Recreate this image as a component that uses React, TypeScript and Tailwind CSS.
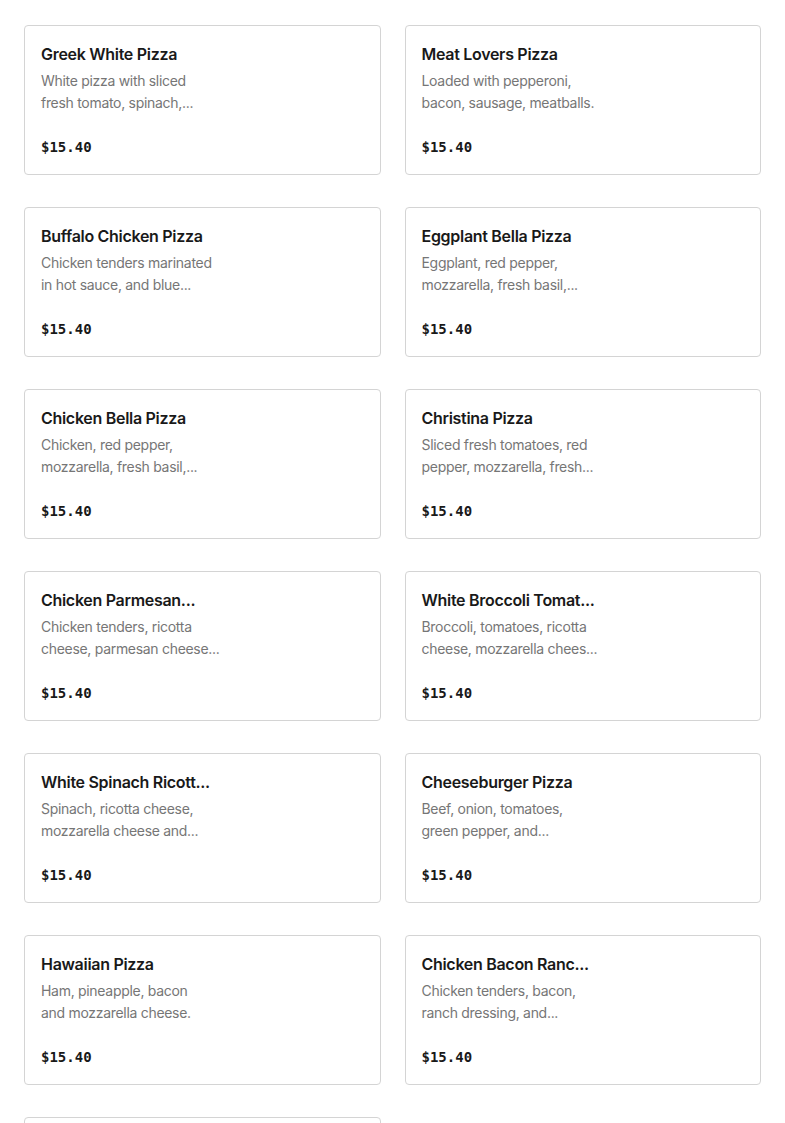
const items = [
  { name: 'Greek White Pizza', lines: ['White pizza with sliced', 'fresh tomato, spinach,...'] },
  { name: 'Meat Lovers Pizza', lines: ['Loaded with pepperoni,', 'bacon, sausage, meatballs.'] },
  { name: 'Buffalo Chicken Pizza', lines: ['Chicken tenders marinated', 'in hot sauce, and blue...'] },
  { name: 'Eggplant Bella Pizza', lines: ['Eggplant, red pepper,', 'mozzarella, fresh basil,...'] },
  { name: 'Chicken Bella Pizza', lines: ['Chicken, red pepper,', 'mozzarella, fresh basil,...'] },
  { name: 'Christina Pizza', lines: ['Sliced fresh tomatoes, red', 'pepper, mozzarella, fresh...'] },
  { name: 'Chicken Parmesan...', lines: ['Chicken tenders, ricotta', 'cheese, parmesan cheese...'] },
  { name: 'White Broccoli Tomat...', lines: ['Broccoli, tomatoes, ricotta', 'cheese, mozzarella chees...'] },
  { name: 'White Spinach Ricott...', lines: ['Spinach, ricotta cheese,', 'mozzarella cheese and...'] },
  { name: 'Cheeseburger Pizza', lines: ['Beef, onion, tomatoes,', 'green pepper, and...'] },
  { name: 'Hawaiian Pizza', lines: ['Ham, pineapple, bacon', 'and mozzarella cheese.'] },
  { name: 'Chicken Bacon Ranc...', lines: ['Chicken tenders, bacon,', 'ranch dressing, and...'] },
  { name: 'Veggie Pizza', lines: ['Mushrooms, onions, green', 'peppers, olives.'] },
]

function MenuCard({ name, lines }: { name: string; lines: string[] }) {
  return (
    <div className="flex h-[150px] flex-col rounded border border-[#d4d4d4] bg-white px-4 pt-4 pb-[17px]">
      <h3 className="text-[16px] leading-6 font-semibold tracking-[-0.3px] whitespace-nowrap text-[#191919]">{name}</h3>
      <p className="mt-1 text-[14px] leading-[22px] tracking-[-0.3px] whitespace-nowrap text-[#767676]">
        {lines.map((line) => (
          <span key={line} className="block">{line}</span>
        ))}
      </p>
      <p className="mt-auto font-['DejaVu_Sans_Mono',monospace] text-[14px] leading-5 font-bold text-[#191919]">$15.40</p>
    </div>
  )
}

export default function App() {
  return (
    <div className="min-h-screen bg-white px-6 pt-[25px] font-['Inter',sans-serif]">
      <div className="grid grid-cols-2 gap-x-6 gap-y-8">
        {items.map((item) => (
          <MenuCard key={item.name} name={item.name} lines={item.lines} />
        ))}
      </div>
    </div>
  )
}
